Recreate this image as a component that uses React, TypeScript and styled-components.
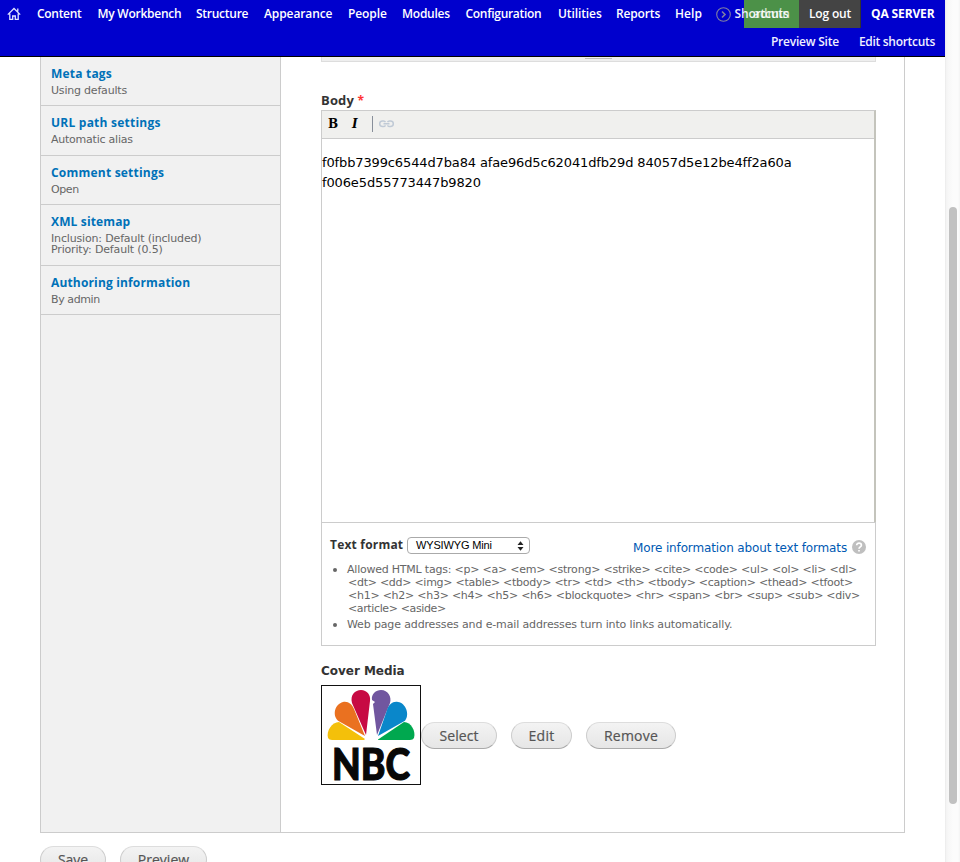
import React from 'react';
import styled, { createGlobalStyle } from 'styled-components';

const Global = createGlobalStyle`
  * { box-sizing: border-box; }
  html, body { margin: 0; height: 100%; background: #fff; overflow: hidden; }
  body { font-family: "DejaVu Sans", sans-serif; color: #333; }
`;

const Page = styled.div`
  display: grid;
  grid-template-columns: 945px 15px;
  width: 960px;
  height: 862px;
  overflow: hidden;
`;
const Site = styled.div`
  display: flex;
  flex-direction: column;
  height: 862px;
  overflow: hidden;
`;
const Scrollbar = styled.div`
  padding: 207px 3px 0 4px;
  background: linear-gradient(90deg, #e8e8e8 0, #f3f3f3 1px, #f7f7f7 3px, #fcfcfc 8px, #fcfcfc 13px, #f4f4f4 15px);
`;
const Thumb = styled.div`
  height: 597px;
  border-radius: 4px;
  background: #c1c1c1;
`;

const Header = styled.header`
  flex: none;
  height: 57px;
  background: #0000cd;
  border-bottom: 1px solid #000;
  color: #fff;
  font: 600 12px/27px "Open Sans", sans-serif;
`;
const TopRow = styled.div`
  display: flex;
  height: 28px;
`;
const Menu = styled.nav`
  display: flex;
  flex: none;
  width: 744px;
  padding-left: 7px;
  position: relative;
  z-index: 1;
`;
const MenuLink = styled.a<{ $w: number; $track?: number }>`
  flex: none;
  width: ${p => p.$w}px;
  white-space: nowrap;
  letter-spacing: ${p => p.$track ?? 0}px;
`;
const HomeLink = styled.a`
  display: flex;
  width: 30px;
  padding-top: 7px;
`;
const ShortcutsLink = styled(MenuLink)`
  display: flex;
  gap: 4px;
  opacity: 0.92;
  svg { flex: none; margin-top: 7px; }
`;
const Tool = styled.a<{ $w: number; $bg?: string; $track: number }>`
  width: ${p => p.$w}px;
  height: 28px;
  padding-left: 9px;
  background: ${p => p.$bg ?? 'transparent'};
  letter-spacing: ${p => p.$track}px;
  white-space: nowrap;
`;
const UserTool = styled(Tool)` color: rgba(255, 255, 255, 0.72); `;
const LogoutTool = styled(Tool)` border-right: 1px solid #333; padding-left: 10px; `;
const ServerName = styled(Tool)` font-weight: 700; padding-left: 10px; `;
const SubRow = styled.div`
  display: flex;
  justify-content: flex-end;
  gap: 20px;
  padding-right: 10px;
  color: #f0f0ff;
`;
const SubLink = styled.a<{ $track: number }>` letter-spacing: ${p => p.$track}px; `;

const Panel = styled.section`
  display: flex;
  flex: none;
  width: 865px;
  height: 776px;
  margin-left: 40px;
  border: 1px solid #ccc;
  border-top: 0;
`;
const Sidebar = styled.ul`
  flex: none;
  width: 240px;
  margin: 0;
  padding: 0;
  list-style: none;
  background: #f1f1f1;
  border-right: 1px solid #ccc;
`;
const Tab = styled.li<{ $h: number }>`
  height: ${p => p.$h}px;
  padding: 7px 10px 0;
  border-bottom: 1px solid #ccc;
`;
const TabTitle = styled.a<{ $track: number }>`
  display: block;
  color: #0071b8;
  font: 700 12px/20px "Open Sans", sans-serif;
  letter-spacing: ${p => p.$track}px;
`;
const TabSummary = styled.div<{ $track: number }>`
  color: #666;
  font-size: 11px;
  line-height: 11px;
  padding-top: 1px;
  white-space: pre;
  letter-spacing: ${p => p.$track}px;
`;

const Content = styled.div`
  display: flex;
  flex-direction: column;
  width: 595px;
  padding-left: 40px;
`;
const Grippie = styled.div`
  display: flex;
  justify-content: center;
  height: 5px;
  padding-top: 1px;
  background: #eee;
  border: 1px solid #ddd;
  border-top: 0;
`;
const GripLine = styled.div` width: 27px; height: 1px; background: #bbb; `;
const BodyLabel = styled.label`
  margin-top: 28px;
  height: 20px;
  font: 700 13px/20px "Open Sans", sans-serif;
  letter-spacing: 0.16px;
`;
const Required = styled.span` color: #f33; font-weight: 700; font-size: 12px; `;
const Editor = styled.div`
  height: 412px;
  border: 1px solid #ccc;
  border-right: 2px solid #c4c4bc;
  border-bottom: 0;
`;
const Toolbar = styled.div`
  display: flex;
  align-items: center;
  height: 28px;
  padding: 0 0 1px 5px;
  background: #f0f0ee;
  border-bottom: 1px solid #ccc;
`;
const ToolButton = styled.button<{ $italic?: boolean }>`
  width: ${p => (p.$italic ? 21 : 24)}px;
  height: 20px;
  padding: 0 0 0 1px;
  border: 0;
  background: none;
  text-align: left;
  color: #000;
  font: ${p => (p.$italic ? 'italic' : 'normal')} 900 12px/20px "DejaVu Serif", serif;
`;
const Divider = styled.i` width: 1px; height: 16px; background: #888f9a; margin: 0 6px 0 0; `;
const EditorText = styled.p`
  margin: 14px 0 0;
  color: #000;
  font-size: 13px;
  line-height: 20px;
  letter-spacing: -0.13px;
  white-space: pre;
`;
const FormatBox = styled.div`
  height: 124px;
  border: 1px solid #ccc;
  padding: 12px 9px 0 8px;
`;
const FormatRow = styled.div` display: flex; height: 28px; `;
const FormatLabel = styled.label`
  width: 77px;
  font: 700 12px/20px "Open Sans", sans-serif;
  letter-spacing: 0.2px;
`;
const SelectBox = styled.div`
  display: flex;
  align-items: center;
  justify-content: space-between;
  width: 123px;
  height: 17px;
  margin-top: 2px;
  padding: 0 5px 0 8px;
  border: 1px solid #aaa;
  border-radius: 4px;
  background: #fff;
  color: #000;
  font: 11px/15px "Liberation Sans", Arial, sans-serif;
  letter-spacing: -0.15px;
`;
const MoreInfo = styled.a`
  display: flex;
  gap: 5px;
  margin-left: auto;
  color: #0059b3;
  font-size: 12px;
  line-height: 26px;
  letter-spacing: -0.14px;
  svg { margin-top: 5px; }
`;
const Tips = styled.ul`
  margin: 0;
  padding: 0;
  list-style: none;
  color: #666;
  font-size: 11px;
  line-height: 13px;
`;
const Tip = styled.li`
  display: flex;
  margin-bottom: 3px;
  white-space: pre;
  letter-spacing: -0.14px;
`;
const Dot = styled.i`
  flex: none;
  width: 4px;
  height: 4px;
  margin: 5px 10px 0 3px;
  border-radius: 50%;
  background: #666;
`;
const TagLine = styled.div<{ $track: number; $indent?: boolean }>`
  letter-spacing: ${p => p.$track}px;
  padding-left: ${p => (p.$indent ? 1 : 0)}px;
`;
const MediaLabel = styled.h3`
  margin: 15px 0 4px;
  font: 700 12px/20px "DejaVu Sans", sans-serif;
  letter-spacing: -0.03px;
`;
const MediaRow = styled.div` display: flex; align-items: center; gap: 14px; `;
const Thumbnail = styled.div`
  width: 100px;
  height: 100px;
  margin-right: -14px;
  border: 1px solid #111;
  svg { display: block; }
`;
const Pill = styled.button<{ $w: number; $track: number }>`
  flex: none;
  width: ${p => p.$w}px;
  height: 27px;
  padding: 1px 0 0;
  border: 1px solid #ccc;
  border-top-color: #ddd;
  border-bottom-color: #aaa;
  border-radius: 14px;
  background: linear-gradient(#f3f3f3, #e6e6e6);
  color: #555;
  font: 14px/24px "Open Sans", sans-serif;
  letter-spacing: ${p => p.$track}px;
  -webkit-text-stroke: 0.2px #555;
`;
const Actions = styled.div`
  display: flex;
  flex: none;
  gap: 14px;
  padding: 13px 0 0 40px;
`;

const menu = [
  ['Content', 60.5, -0.3], ['My Workbench', 98.5, -0.25], ['Structure', 68, -0.26],
  ['Appearance', 84, -0.1], ['People', 54, -0.1], ['Modules', 63.5, -0.25],
  ['Configuration', 92.5, -0.29], ['Utilities', 58, -0.1], ['Reports', 59, -0.15], ['Help', 40.5, 0.05],
] as const;

const tabs = [
  { title: 'Meta tags', t: 0.2, text: 'Using defaults', s: -0.2, h: 49 },
  { title: 'URL path settings', t: 0.23, text: 'Automatic alias', s: -0.23, h: 50 },
  { title: 'Comment settings', t: 0.21, text: 'Open', s: -0.4, h: 49 },
  { title: 'XML sitemap', t: 0.14, text: 'Inclusion: Default (included)\nPriority: Default (0.5)', s: -0.16, h: 61 },
  { title: 'Authoring information', t: 0.16, text: 'By admin', s: -0.4, h: 49 },
];

const HomeIcon = () => (
  <svg width="14" height="14" viewBox="0 0 14 14" fill="none" stroke="#dfe3ff" strokeWidth="1.3">
    <path d="M.8 7.6 7 1.5l6.2 6.1M2.800 6.500v5.800h2.900V9h2.600v3.300h2.900V6.500M10.800 1.600v3" />
  </svg>
);
const CircleArrow = () => (
  <svg width="15" height="15" viewBox="0 0 15 15" fill="none" stroke="#8a8aa0">
    <circle cx="7.5" cy="7.5" r="6.8" strokeWidth="1.1" />
    <path d="m6 4.5 3 3-3 3" strokeWidth="1.6" />
  </svg>
);
const LinkIcon = () => (
  <svg width="15" height="8" viewBox="0 0 15 8" fill="none" stroke="#c0cad6" strokeWidth="1.5">
    <path d="M6.5 2.2C6 1.3 5.5 1 4.5 1h-1a2.7 2.7 0 0 0 0 5.6h1c1 0 1.5-.4 2-1.2M8.5 2.2C9 1.3 9.5 1 10.5 1h1a2.7 2.7 0 0 1 0 5.6h-1c-1 0-1.5-.4-2-1.2M4.500 3.800h6" />
  </svg>
);
const UpDown = () => (
  <svg width="7" height="10" viewBox="0 0 7 10" fill="#222"><path d="M.5 4 3.5.2 6.5 4zM.5 6h6l-3 3.8z" /></svg>
);
const HelpIcon = () => (
  <svg width="14" height="14" viewBox="0 0 14 14">
    <circle cx="7" cy="7" r="7" fill="#bfbfbf" />
    <path d="M4.700 5.300c0-3 4.700-2.800 4.700-.1C9.400 6.800 7 6.900 7 8.700M7 10v1.500" fill="none" stroke="#fff" strokeWidth="1.700" />
  </svg>
);
const Peacock = () => (
  <svg width="98" height="98" viewBox="1 1 98 98">
    <path fill="#f4c00a" d="M44 54 18 37C11 37 5 46 7 53q1 2 4 2h32z" />
    <path fill="#ea7120" d="M44 51 17 35.7C11 30 14 19 22 17c5-1 9 2 11 7z" />
    <path fill="#c70a43" d="M45 50 31 18C29 10 34 5 40 5s10 5 9 11z" />
    <path fill="#71569f" d="M56 50 52 19l2-2-3-2C50 9 55 5 60 5c7 0 11 7 9 13z" />
    <path fill="#0a87ca" d="m57 51 9-26c2-6 6-9 11-8 8 1 12 13 7 18.7z" />
    <path fill="#00a84f" d="M57 54.5 83 37c7 0 12 9 10 16q-1 2-4 2H57z" />
    <text x="11" y="94.5" fill="#080808" stroke="#080808" strokeWidth="1.2" fontFamily="Lato" fontWeight="900" fontSize="43.5" textLength="78" lengthAdjust="spacingAndGlyphs">NBC</text>
  </svg>
);

export default function App() {
  return (
    <>
      <Global />
      <Page>
        <Site>
          <Header>
            <TopRow>
              <Menu>
                <HomeLink><HomeIcon /></HomeLink>
                {menu.map(([name, w, track]) => <MenuLink key={name} $w={w} $track={track}>{name}</MenuLink>)}
                <ShortcutsLink $w={28} $track={-0.17}><CircleArrow />Shortcuts</ShortcutsLink>
              </Menu>
              <UserTool $w={55} $bg="#4c9148" $track={0}>admin</UserTool>
              <LogoutTool $w={62} $bg="#444" $track={-0.18}>Log out</LogoutTool>
              <ServerName $w={84} $track={-0.13}>QA SERVER</ServerName>
            </TopRow>
            <SubRow>
              <SubLink $track={-0.22}>Preview Site</SubLink>
              <SubLink $track={-0.3}>Edit shortcuts</SubLink>
            </SubRow>
          </Header>
          <Panel>
            <Sidebar>
              {tabs.map(tab => (
                <Tab key={tab.title} $h={tab.h}>
                  <TabTitle $track={tab.t}>{tab.title}</TabTitle>
                  <TabSummary $track={tab.s}>{tab.text}</TabSummary>
                </Tab>
              ))}
            </Sidebar>
            <Content>
              <Grippie><GripLine /></Grippie>
              <BodyLabel>Body <Required>*</Required></BodyLabel>
              <Editor>
                <Toolbar>
                  <ToolButton>B</ToolButton>
                  <ToolButton $italic>I</ToolButton>
                  <Divider />
                  <LinkIcon />
                </Toolbar>
                <EditorText>{'f0fbb7399c6544d7ba84 afae96d5c62041dfb29d 84057d5e12be4ff2a60a\nf006e5d55773447b9820'}</EditorText>
              </Editor>
              <FormatBox>
                <FormatRow>
                  <FormatLabel>Text format</FormatLabel>
                  <SelectBox>WYSIWYG Mini<UpDown /></SelectBox>
                  <MoreInfo>More information about text formats<HelpIcon /></MoreInfo>
                </FormatRow>
                <Tips>
                  <Tip>
                    <Dot />
                    <div>
                      <TagLine $track={-0.225}>{'Allowed HTML tags: <p> <a> <em> <strong> <strike> <cite> <code> <ul> <ol> <li> <dl>'}</TagLine>
                      <TagLine $indent $track={-0.27}>{'<dt> <dd> <img> <table> <tbody> <tr> <td> <th> <tbody> <caption> <thead> <tfoot>'}</TagLine>
                      <TagLine $indent $track={-0.255}>{'<h1> <h2> <h3> <h4> <h5> <h6> <blockquote> <hr> <span> <br> <sup> <sub> <div>'}</TagLine>
                      <TagLine $indent $track={-0.37}>{'<article> <aside>'}</TagLine>
                    </div>
                  </Tip>
                  <Tip><Dot />Web page addresses and e-mail addresses turn into links automatically.</Tip>
                </Tips>
              </FormatBox>
              <MediaLabel>Cover Media</MediaLabel>
              <MediaRow>
                <Thumbnail><Peacock /></Thumbnail>
                <Pill $w={76} $track={0.05}>Select</Pill>
                <Pill $w={61} $track={0.3}>Edit</Pill>
                <Pill $w={90} $track={0.25}>Remove</Pill>
              </MediaRow>
            </Content>
          </Panel>
          <Actions>
            <Pill $w={66} $track={-0.1}>Save</Pill>
            <Pill $w={87} $track={0.02}>Preview</Pill>
          </Actions>
        </Site>
        <Scrollbar><Thumb /></Scrollbar>
      </Page>
    </>
  );
}
